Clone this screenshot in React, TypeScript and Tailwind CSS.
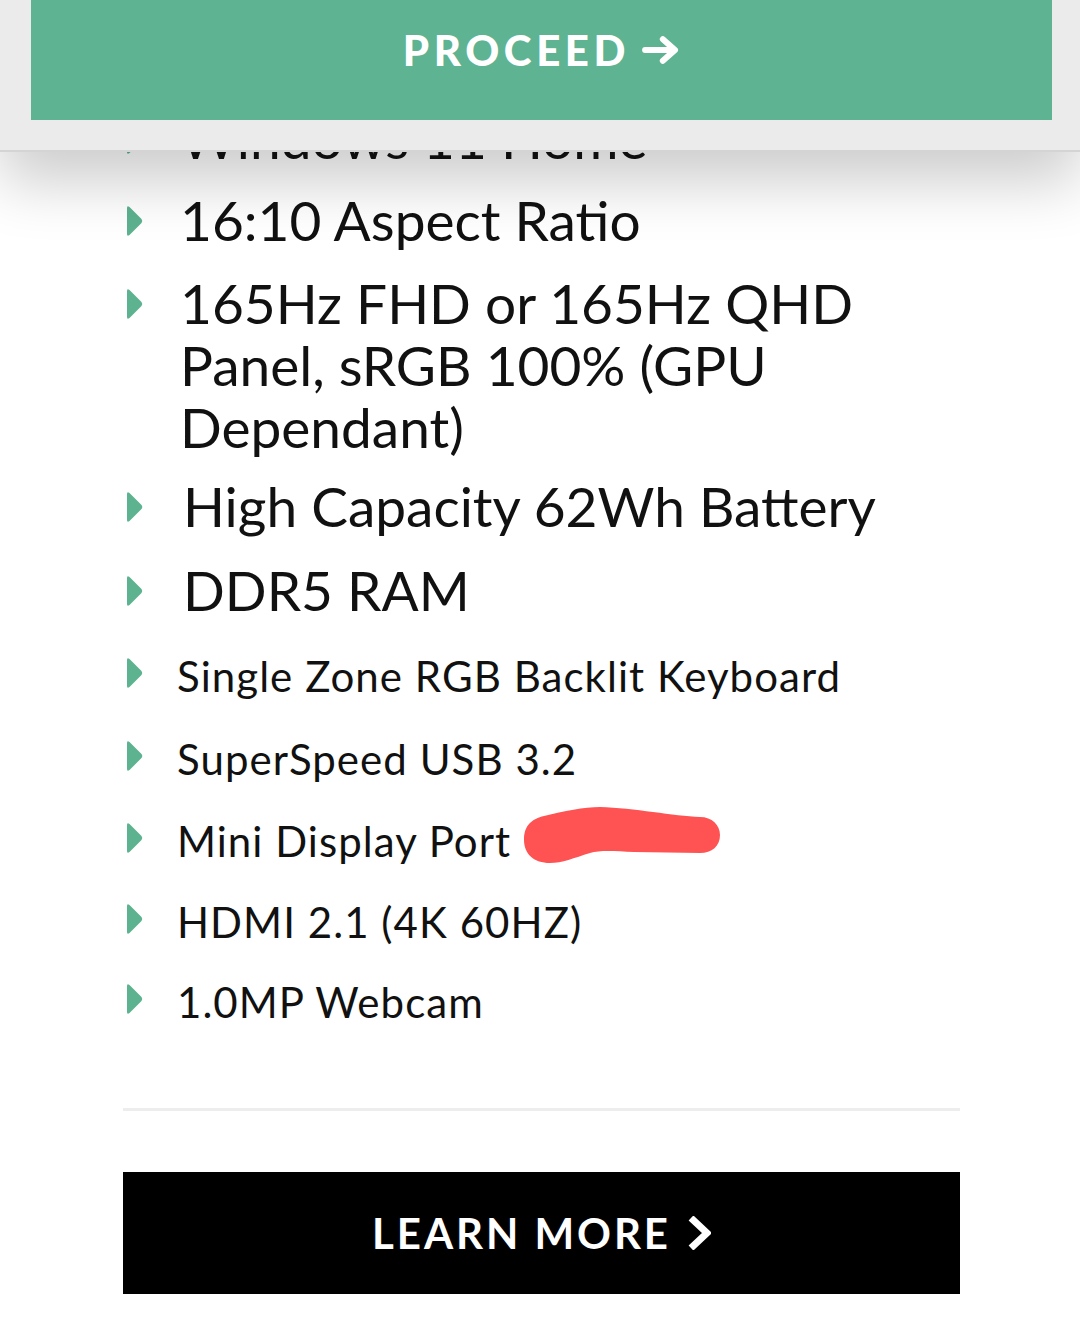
import React from "react";

const Bullet = ({ mt }: { mt: string }) => (
  <svg viewBox="0 0 18 32" className={`w-[18px] h-[32px] shrink-0 ${mt}`}>
    <path d="M2 3 Q2 0 4.5 2 L16.5 14 Q18 16 16.5 18 L4.5 30 Q2 32 2 29 Z" fill="#5db28f" />
  </svg>
);

type Item = { text: string; big: boolean; mt: string; gap: string };

const items: Item[] = [
  { text: "Windows 11 Home", big: true, mt: "mt-0", gap: "ml-[37px]" },
  { text: "16:10 Aspect Ratio", big: true, mt: "mt-[20px]", gap: "ml-[37px]" },
  { text: "165Hz FHD or 165Hz QHD Panel, sRGB 100% (GPU Dependant)", big: true, mt: "mt-[21px]", gap: "ml-[37px]" },
  { text: "High Capacity 62Wh Battery", big: true, mt: "mt-[17px]", gap: "ml-[40px]" },
  { text: "DDR5 RAM", big: true, mt: "mt-[22px]", gap: "ml-[40px]" },
  { text: "Single Zone RGB Backlit Keyboard", big: false, mt: "mt-[27px]", gap: "ml-[34px]" },
  { text: "SuperSpeed USB 3.2", big: false, mt: "mt-[27px]", gap: "ml-[34px]" },
  { text: "Mini Display Port", big: false, mt: "mt-[26px]", gap: "ml-[34px]" },
  { text: "HDMI 2.1 (4K 60HZ)", big: false, mt: "mt-[25px]", gap: "ml-[34px]" },
  { text: "1.0MP Webcam", big: false, mt: "mt-[24px]", gap: "ml-[34px]" },
];

export default function App() {
  return (
    <div className="relative w-[1080px] h-[1324px] bg-white overflow-hidden font-['Lato',sans-serif] text-[#111]">
      <ul className="pt-[107px] pl-[125px] w-[960px]">
        {items.map((it, i) => (
          <li key={i} className={`flex ${it.mt}`}>
            <Bullet mt={it.big ? "mt-[16px]" : "mt-[9px]"} />
            <span
              className={`${it.gap} ${
                it.big
                  ? "text-[55px] leading-[62px]"
                  : "text-[42px] leading-[56px] tracking-[0.025em]"
              } flex`}
            >
              <span>{it.text}</span>
              {it.text === "Mini Display Port" && (
                <svg viewBox="0 0 196 56" className="w-[196px] h-[56px] ml-[13px] -mt-[6px] self-start">
                  <path
                    d="M0 33 C0 18 8 12 20 9 C40 4 60 0 76 0 C110 1 150 9 176 10 C188 10 196 18 196 28 C196 39 188 46 176 46 L110 45 C90 44 76 43 66 46 C50 51 38 56 26 56 C10 56 0 47 0 33 Z"
                    fill="#ff5353"
                  />
                </svg>
              )}
            </span>
          </li>
        ))}
      </ul>

      <div className="ml-[123px] w-[837px] h-[3px] bg-[#ededed] mt-[78px]" />

      <div className="ml-[123px] w-[837px] h-[122px] bg-black mt-[61px] flex items-center justify-center">
        <span className="text-white font-bold text-[42px] tracking-[0.07em] leading-none">LEARN MORE</span>
        <svg viewBox="0 0 24 34" className="w-[24px] h-[34px] ml-[16px]">
          <path d="M4 2 L20 17 L4 32" fill="none" stroke="white" strokeWidth="7" strokeLinejoin="miter" />
        </svg>
      </div>

      <div className="absolute top-0 left-0 w-[1080px] h-[152px] bg-[#ebebeb] border-b-2 border-[#d4d4d4] shadow-[0_30px_60px_rgba(0,0,0,0.2)]">
        <div className="ml-[31px] w-[1021px] h-[120px] bg-[#5eb392] flex items-center justify-center pb-[20px]">
          <span className="text-white font-black text-[42px] tracking-[0.11em] leading-none">PROCEED</span>
          <svg viewBox="0 0 40 30" className="w-[38px] h-[28px] ml-[12px]">
            <path d="M3 15 H34 M22 3.5 L35 15 L22 26.5" fill="none" stroke="white" strokeWidth="6.5" strokeLinecap="round" strokeLinejoin="round" />
          </svg>
        </div>
      </div>
    </div>
  );
}
